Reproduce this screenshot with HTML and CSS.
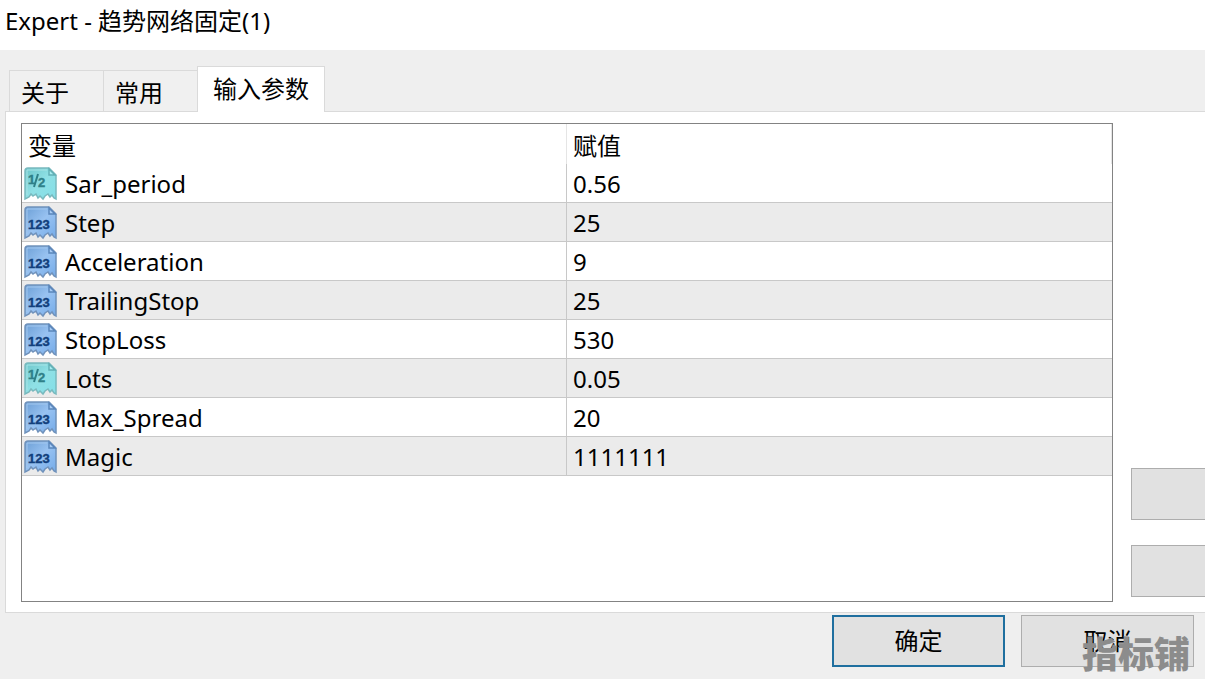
FILE: index.html
```html
<!DOCTYPE html>
<html lang="zh-CN">
<head>
    <meta charset="UTF-8">
    <meta name="viewport" content="width=device-width, initial-scale=1.0">
    <title>Expert - 趋势网络固定(1)</title>
    <link rel="stylesheet" href="styles.css">
</head>
<body>
    <!-- torn sheet shapes shared by the row icons -->
    <svg class="defs" width="0" height="0" aria-hidden="true">
        <defs>
            <linearGradient id="teal" x1="0" y1="0" x2="1" y2="1">
                <stop offset="0" stop-color="#6cc6ca"/>
                <stop offset="0.5" stop-color="#8fe0e5"/>
                <stop offset="1" stop-color="#84dfe8"/>
            </linearGradient>
            <linearGradient id="blue" x1="0" y1="0" x2="1" y2="1">
                <stop offset="0" stop-color="#6c9fd6"/>
                <stop offset="0.5" stop-color="#98c2f1"/>
                <stop offset="1" stop-color="#74abe9"/>
            </linearGradient>
            <symbol id="sheet-teal" viewBox="0 0 34 34">
                <path d="M4 1H25L32 8V32L30 31L28 28L26 30L24 27L21 29L19 32L16 29L14 31L12 27L9 29L7 27L5 30L1 32V4Q1 1 4 1Z" fill="url(#teal)" stroke="#79b9be" stroke-width="1.500"/>
                <path d="M25 2V8H31Z" fill="#a8edf0" stroke="#62b0b6" stroke-width="1.500"/>
                <path d="M3 28V3H23" fill="none" stroke="#a8e4e6"/>
            </symbol>
            <symbol id="sheet-blue" viewBox="0 0 34 34">
                <path d="M4 1H25L32 8V32L30 31L28 28L26 30L24 27L21 29L19 32L16 29L14 31L12 27L9 29L7 27L5 30L1 32V4Q1 1 4 1Z" fill="url(#blue)" stroke="#7092bb" stroke-width="1.500"/>
                <path d="M25 2V8H31Z" fill="#a9cdf6" stroke="#5a86bb" stroke-width="1.500"/>
                <path d="M3 28V3H23" fill="none" stroke="#a4c8ee"/>
            </symbol>
        </defs>
    </svg>

    <header class="titlebar">
        <h1>Expert - 趋势网络固定(1)</h1>
    </header>

    <main class="dialog">
        <div class="tabs" role="tablist">
            <button class="tab" type="button" role="tab" aria-selected="false">关于</button>
            <button class="tab" type="button" role="tab" aria-selected="false">常用</button>
            <button class="tab active" type="button" role="tab" aria-selected="true">输入参数</button>
        </div>

        <section class="panel">
            <div class="list">
                <table class="params">
                    <thead>
                        <tr><th>变量</th><th>赋值</th></tr>
                    </thead>
                    <tbody>
                        <tr>
                            <td><div class="name"><svg class="icon double" viewBox="0 0 34 34"><use href="#sheet-teal"/><text x="4" y="17">1</text><path d="M10 20L14 7"/><text x="14" y="20">2</text></svg>Sar_period</div></td>
                            <td>0.56</td>
                        </tr>
                        <tr>
                            <td><div class="name"><svg class="icon" viewBox="0 0 34 34"><use href="#sheet-blue"/><text x="4" y="23">123</text></svg>Step</div></td>
                            <td>25</td>
                        </tr>
                        <tr>
                            <td><div class="name"><svg class="icon" viewBox="0 0 34 34"><use href="#sheet-blue"/><text x="4" y="23">123</text></svg>Acceleration</div></td>
                            <td>9</td>
                        </tr>
                        <tr>
                            <td><div class="name"><svg class="icon" viewBox="0 0 34 34"><use href="#sheet-blue"/><text x="4" y="23">123</text></svg>TrailingStop</div></td>
                            <td>25</td>
                        </tr>
                        <tr>
                            <td><div class="name"><svg class="icon" viewBox="0 0 34 34"><use href="#sheet-blue"/><text x="4" y="23">123</text></svg>StopLoss</div></td>
                            <td>530</td>
                        </tr>
                        <tr>
                            <td><div class="name"><svg class="icon double" viewBox="0 0 34 34"><use href="#sheet-teal"/><text x="4" y="17">1</text><path d="M10 20L14 7"/><text x="14" y="20">2</text></svg>Lots</div></td>
                            <td>0.05</td>
                        </tr>
                        <tr>
                            <td><div class="name"><svg class="icon" viewBox="0 0 34 34"><use href="#sheet-blue"/><text x="4" y="23">123</text></svg>Max_Spread</div></td>
                            <td>20</td>
                        </tr>
                        <tr>
                            <td><div class="name"><svg class="icon" viewBox="0 0 34 34"><use href="#sheet-blue"/><text x="4" y="23">123</text></svg>Magic</div></td>
                            <td>1111111</td>
                        </tr>
                    </tbody>
                </table>
            </div>
            <div class="side">
                <button class="btn side-btn" type="button" aria-label="加载"></button>
                <button class="btn side-btn" type="button" aria-label="保存"></button>
            </div>
        </section>
    </main>

    <footer class="footer">
        <button class="btn primary" type="button">确定</button>
        <button class="btn" type="button">取消</button>
        <span class="watermark">指标铺</span>
    </footer>
</body>
</html>
```
FILE: styles.css
```css
* {
    box-sizing: border-box;
}

body {
    margin: 0;
    min-height: 100vh;
    display: flex;
    flex-direction: column;
    background-color: #efefef;
    color: #000;
    font-family: "Noto Sans", "Noto Sans CJK SC", sans-serif;
    font-size: 24px;
    line-height: 32px;
}

button {
    font: inherit;
    color: inherit;
}

.defs {
    position: absolute;
}

.titlebar {
    background-color: #fff;
    padding: 5px 5px 13px;
}

.titlebar h1 {
    margin: 0;
    font-size: 24px;
    font-weight: normal;
}

.dialog {
    flex: 1;
    display: flex;
    flex-direction: column;
    padding: 16px 0 0 5px;
}

/* tabs */
.tabs {
    display: flex;
    align-items: flex-end;
    padding-left: 4px;
}

.tab {
    height: 41px;
    padding: 3px 34px 0 11px;
    border: 1px solid #dadada;
    border-width: 1px 0 0 1px;
    background-color: #f0f0f0;
    text-align: left;
}

.tab.active {
    z-index: 1;
    height: 46px;
    margin-bottom: -1px;
    padding: 0 15px 2px;
    border-right-width: 1px;
    background-color: #fff;
}

.panel {
    flex: 1;
    display: flex;
    gap: 18px;
    padding: 11px 0 10px 15px;
    border: 1px solid #dadada;
    border-right: none;
    background-color: #fff;
}

.list {
    flex: 1;
    border: 1px solid #838383;
}

/* parameter table */
.params {
    width: 100%;
    table-layout: fixed;
    border-collapse: separate;
    border-spacing: 0;
}

.params th {
    height: 40px;
    padding: 3px 6px 0;
    border-right: 1px solid #e5e5e5;
    font-weight: normal;
    text-align: left;
}

.params td {
    height: 39px;
    padding: 2px 6px 0;
    border-bottom: 1px solid #c8c8c8;
}

.params td:first-child {
    padding: 2px 2px 0;
    border-right: 1px solid #c8c8c8;
}

.params tr:nth-child(even) td {
    background-color: #ebebeb;
}

.name {
    display: flex;
    align-items: center;
    gap: 7px;
}

.icon {
    width: 34px;
    height: 34px;
}

.icon text {
    font-family: "Liberation Sans", sans-serif;
    font-size: 13px;
    font-weight: bold;
    fill: #123f7c;
    stroke: #123f7c;
    stroke-width: 0.4px;
}

.icon.double text {
    fill: #2f8088;
    stroke: #2f8088;
}

.icon.double path {
    stroke: #2f8088;
    stroke-width: 2px;
}

/* buttons */
.btn {
    width: 173px;
    height: 52px;
    padding: 0;
    border: 1px solid #adadad;
    background-color: #e1e1e1;
}

.btn.primary {
    border: 2px solid #1f6f9f;
}

.side {
    display: flex;
    flex-direction: column;
    justify-content: flex-end;
    gap: 25px;
    padding-bottom: 5px;
}

.side-btn {
    width: 74px;
    border-right: none;
}

.footer {
    position: relative;
    display: flex;
    justify-content: flex-end;
    gap: 16px;
    padding: 2px 11px 12px;
}

.watermark {
    position: absolute;
    right: 15px;
    bottom: 3px;
    color: #8c8c8c;
    font-size: 36px;
    font-weight: 900;
    line-height: 42px;
}
```
